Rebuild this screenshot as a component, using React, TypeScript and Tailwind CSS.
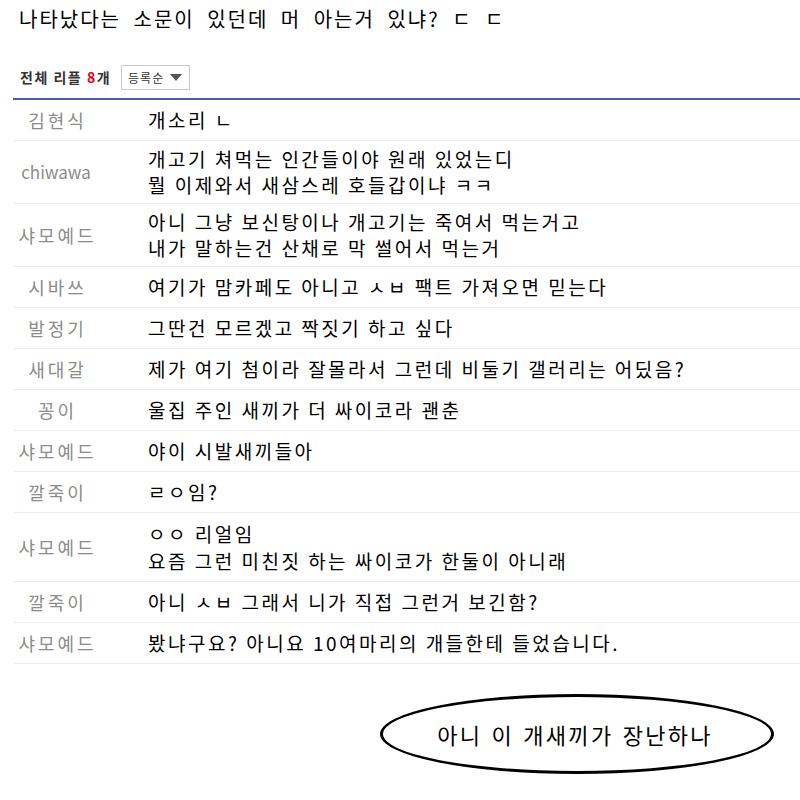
import React from "react";

type Row = { name: string; lines: string[]; tall?: boolean };

const rows: Row[] = [
  { name: "김현식", lines: ["개소리 ㄴ"] },
  { name: "chiwawa", lines: ["개고기 쳐먹는 인간들이야 원래 있었는디", "뭘 이제와서 새삼스레 호들갑이냐 ㅋㅋ"] },
  { name: "샤모예드", lines: ["아니 그냥 보신탕이나 개고기는 죽여서 먹는거고", "내가 말하는건 산채로 막 썰어서 먹는거"] },
  { name: "시바쓰", lines: ["여기가 맘카페도 아니고 ㅅㅂ 팩트 가져오면 믿는다"] },
  { name: "발정기", lines: ["그딴건 모르겠고 짝짓기 하고 싶다"] },
  { name: "새대갈", lines: ["제가 여기 첨이라 잘몰라서 그런데 비둘기 갤러리는 어딨음?"] },
  { name: "꽁이", lines: ["울집 주인 새끼가 더 싸이코라 괜춘"] },
  { name: "샤모예드", lines: ["야이 시발새끼들아"] },
  { name: "깔죽이", lines: ["ㄹㅇ임?"] },
  { name: "샤모예드", lines: ["ㅇㅇ 리얼임", "요즘 그런 미친짓 하는 싸이코가 한둘이 아니래"], tall: true },
  { name: "깔죽이", lines: ["아니 ㅅㅂ 그래서 니가 직접 그런거 보긴함?"] },
  { name: "샤모예드", lines: ["봤냐구요? 아니요 10여마리의 개들한테 들었습니다."] },
];

const font = { fontFamily: '"Noto Sans CJK KR", "Noto Sans", sans-serif' };

export default function App() {
  return (
    <div className="w-[800px] h-[800px] bg-white overflow-hidden" style={font}>
      <div className="pl-[19px] pt-[5px] text-[20px] leading-[28px] text-black tracking-[2px] [word-spacing:6px]">
        나타났다는 소문이 있던데 머 아는거 있냐? ㄷ ㄷ
      </div>

      <div className="flex items-center pl-[20px] mt-[32px] h-[25px]">
        <span className="text-[14px] font-bold text-[#333] tracking-[1.5px]">
          전체 리플 <span className="text-[#e60012]">8</span>개
        </span>
        <div className="ml-[10px] flex items-center w-[69px] h-[25px] border border-[#cccccc] bg-white pl-[6px]">
          <span className="text-[12px] text-[#333] tracking-[1px]">등록순</span>
          <span className="ml-[6px] w-0 h-0 border-l-[6px] border-r-[6px] border-t-[7px] border-l-transparent border-r-transparent border-t-[#555]" />
        </div>
      </div>

      <div className="ml-[13px] mt-[8px] border-t-2 border-[#4f5aa8]">
        {rows.map((r, i) => (
          <div
            key={i}
            className={`flex items-center border-b border-[#ebebeb] ${
              r.tall ? "min-h-[66px] py-[7px]" : r.lines.length > 1 ? "min-h-[62px] py-[5px]" : "min-h-[41px] py-[5px]"
            }`}
          >
            <div
              className={`w-[86px] text-center text-[#8c8c8c] leading-[26px] shrink-0 ${
                /[가-힣]/.test(r.name) ? "text-[18px] tracking-[3px] pl-[3px]" : "text-[17px]"
              }`}
            >
              {r.name}
            </div>
            <div className="pl-[49px] text-[19px] text-black leading-[26px] tracking-[2.5px]">
              {r.lines.map((l, j) => (
                <div key={j} className={r.tall ? "leading-[27px]" : ""}>
                  {l}
                </div>
              ))}
            </div>
          </div>
        ))}
      </div>

      <div className="flex justify-end pr-[26px] mt-[30px]">
        <div className="w-[394px] h-[80px] rounded-[50%] border-[3px] border-black flex items-center justify-center">
          <span className="text-[22px] text-black leading-none tracking-[2.3px] [word-spacing:2px] pr-[4px]">
            아니 이 개새끼가 장난하나
          </span>
        </div>
      </div>
    </div>
  );
}
